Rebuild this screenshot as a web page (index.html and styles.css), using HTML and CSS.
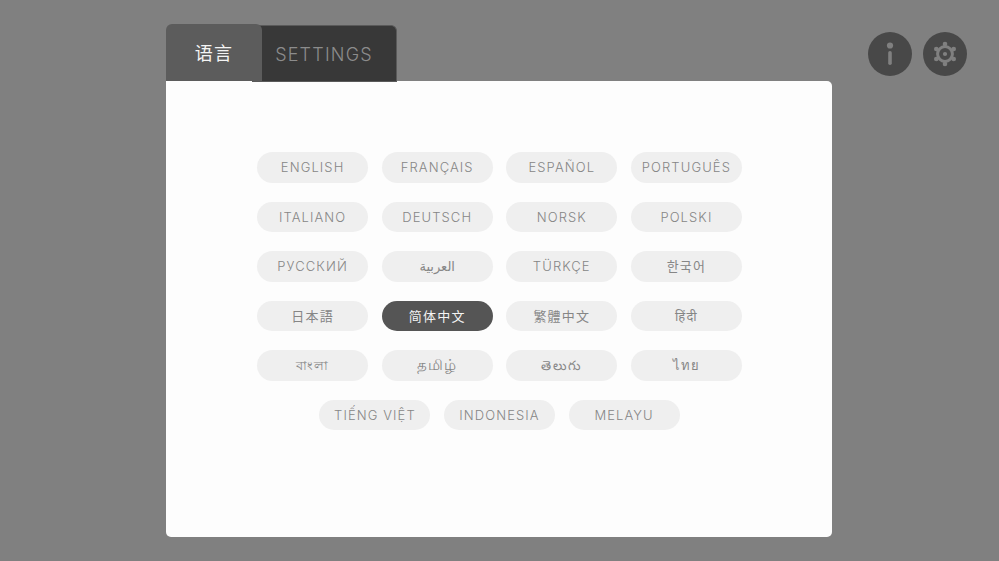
FILE: index.html
```html
<!DOCTYPE html>
<html lang="en">
<head>
    <meta charset="UTF-8">
    <meta name="viewport" content="width=device-width, initial-scale=1.0">
    <title>语言</title>
    <link rel="stylesheet" href="styles.css">
</head>
<body>
    <div class="top">
        <div class="tabs">
            <button class="tab tab-active" lang="zh-CN">语言</button>
            <button class="tab tab-other">SETTINGS</button>
        </div>
        <div class="icons">
            <button class="round" aria-label="Info">
                <svg width="44" height="44" viewBox="0 0 44 44">
                    <circle cx="22" cy="13.5" r="3.1" fill="#808080"/>
                    <rect x="20.2" y="19" width="3.6" height="14" rx="1.8" fill="#808080"/>
                </svg>
            </button>
            <button class="round" aria-label="Settings">
                <svg width="44" height="44" viewBox="0 0 44 44">
                    <g fill="#808080">
                        <circle cx="22" cy="12" r="2.3"/>
                        <circle cx="30.7" cy="17" r="2.3"/>
                        <circle cx="30.7" cy="27" r="2.3"/>
                        <circle cx="22" cy="32" r="2.3"/>
                        <circle cx="13.3" cy="27" r="2.3"/>
                        <circle cx="13.3" cy="17" r="2.3"/>
                        <circle cx="22" cy="22" r="2.1"/>
                    </g>
                    <circle cx="22" cy="22" r="7.4" fill="none" stroke="#808080" stroke-width="3"/>
                </svg>
            </button>
        </div>
    </div>
    <div class="card">
        <div class="langs">
            <button class="pill">ENGLISH</button>
            <button class="pill">FRANÇAIS</button>
            <button class="pill">ESPAÑOL</button>
            <button class="pill">PORTUGUÊS</button>
            <button class="pill">ITALIANO</button>
            <button class="pill">DEUTSCH</button>
            <button class="pill">NORSK</button>
            <button class="pill">POLSKI</button>
            <button class="pill">РУССКИЙ</button>
            <button class="pill script arabic" lang="ar">العربية</button>
            <button class="pill">TÜRKÇE</button>
            <button class="pill script" lang="ko">한국어</button>
            <button class="pill script" lang="ja">日本語</button>
            <button class="pill script selected" lang="zh-CN">简体中文</button>
            <button class="pill script" lang="zh-TW">繁體中文</button>
            <button class="pill script up" lang="hi">हिंदी</button>
            <button class="pill script up" lang="bn">বাংলা</button>
            <button class="pill script tamil" lang="ta">தமிழ்</button>
            <button class="pill script up" lang="te">తెలుగు</button>
            <button class="pill script" lang="th">ไทย</button>
            <button class="pill">TIẾNG VIỆT</button>
            <button class="pill">INDONESIA</button>
            <button class="pill">MELAYU</button>
        </div>
    </div>
</body>
</html>
```

FILE: styles.css
```css
body {
    margin: 0;
    height: 561px;
    overflow: hidden;
    background-color: #808080;
    font-family: "Inter", "Noto Sans", "Noto Sans CJK SC", "DejaVu Sans", sans-serif;
}
button {
    border: 0;
    padding: 0;
    font-family: inherit;
    cursor: pointer;
}
.top {
    display: flex;
    justify-content: space-between;
    height: 81px;
    padding: 0 32px 0 166px;
}
.tabs {
    display: flex;
    align-items: flex-start;
    padding-top: 24px;
}
.tab {
    font-size: 18px;
    letter-spacing: 1.2px;
}
.tab-active {
    position: relative;
    z-index: 1;
    width: 96px;
    height: 57px;
    padding-bottom: 2px;
    border-radius: 6px 6px 0 0;
    background: #5c5c5c;
    color: #f4f4f4;
}
.tab-other {
    width: 145px;
    height: 57px;
    margin: 1px 0 0 -10px;
    padding-top: 2px;
    border: 1px solid #5a5a5a;
    border-width: 1px 1px 1px 0;
    border-radius: 0 6px 0 0;
    background: #383838;
    color: #8c8c8c;
    font-weight: 300;
}
.icons {
    display: flex;
    gap: 11px;
    padding-top: 32px;
}
.round {
    width: 44px;
    height: 44px;
    border-radius: 50%;
    background: #484848;
}
.round svg {
    display: block;
}
.card {
    width: 666px;
    height: 456px;
    margin-left: 166px;
    padding: 71px 0 0 1px;
    box-sizing: border-box;
    border-radius: 0 5px 5px 5px;
    background: #fdfdfd;
}
.langs {
    display: flex;
    flex-wrap: wrap;
    justify-content: center;
    gap: 19px 13.6px;
    width: 486px;
    margin: 0 auto;
}
.pill {
    width: 111px;
    height: 30.5px;
    border-radius: 16px;
    background: #efefef;
    color: #868686;
    font-size: 13px;
    font-weight: 350;
    letter-spacing: 1.1px;
    line-height: 30px;
}
.script {
    font-weight: 400;
    letter-spacing: 1.2px;
}
.arabic {
    padding-bottom: 3px;
    letter-spacing: 0;
}
.tamil {
    font-size: 15px;
}
.up {
    padding-bottom: 4px;
}
.selected {
    background: #555555;
    color: #f4f4f4;
}
```
